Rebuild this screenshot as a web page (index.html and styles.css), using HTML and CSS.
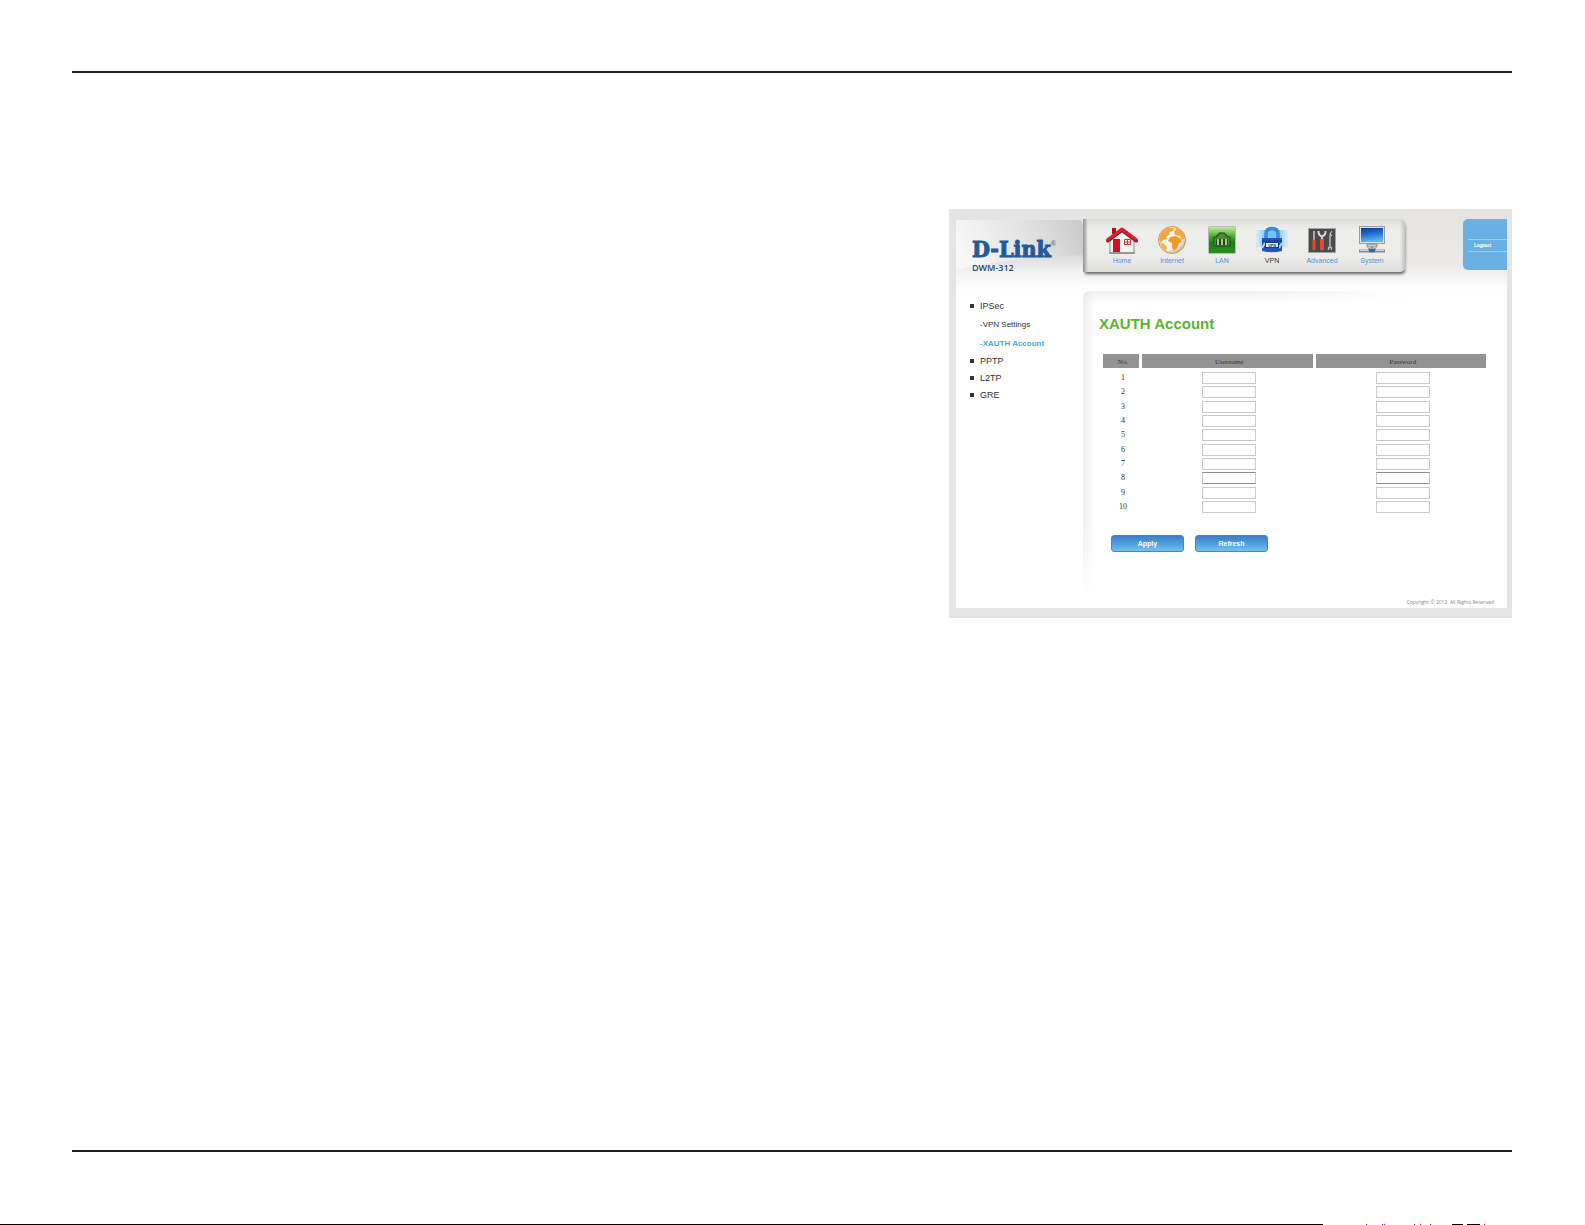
FILE: index.html
```html
<!DOCTYPE html>
<html lang="en">
<head>
  <meta charset="UTF-8">
  <meta name="viewport" content="width=device-width, initial-scale=1.0">
  <title>XAUTH Account</title>
  <link rel="stylesheet" href="styles.css">
</head>
<body>
  <hr class="rule">
  <main>
    <div class="router">
      <header>
        <div class="brand">
          <svg class="brand-bg" viewBox="0 0 127 72" preserveAspectRatio="none" aria-hidden="true">
            <defs>
              <linearGradient id="brandTop" x1="0" y1="0.3" x2="1" y2="0">
                <stop offset="0" stop-color="#f7f7f7"/>
                <stop offset="0.5" stop-color="#e4e4e4"/>
                <stop offset="1" stop-color="#c9c9c9"/>
              </linearGradient>
              <linearGradient id="brandLow" x1="0" y1="0" x2="0" y2="1">
                <stop offset="0" stop-color="#dadada"/>
                <stop offset="0.5" stop-color="#f4f4f4"/>
                <stop offset="1" stop-color="#ffffff"/>
              </linearGradient>
            </defs>
            <path d="M0 1H123Q127 2 127 7V72H0Z" fill="url(#brandTop)"/>
            <path d="M0 51Q60 37 127 36V72H0Z" fill="url(#brandLow)"/>
          </svg>
          <div class="logo">D-Link<sup>®</sup></div>
          <div class="model">DWM-312</div>
        </div>
        <nav class="topnav">
          <a href="#">
            <svg width="32" height="28" viewBox="0 0 32 28">
              <path d="M4 14L16 4L28 14V27H4Z" fill="#f6f4f2" stroke="#8d8d8d"/>
              <path d="M3 27H29" stroke="#888" stroke-width="1.5"/>
              <path d="M6 2H10V8H6Z" fill="#b5121f"/>
              <path d="M2 14.500L16 4L30 14.500" fill="none" stroke="#8e1a22" stroke-width="4" stroke-linejoin="round" stroke-linecap="round"/>
              <path d="M2 13.500L16 3L30 13.500" fill="none" stroke="#dc2030" stroke-width="3" stroke-linejoin="round" stroke-linecap="round"/>
              <path d="M7 13H14V26H7Z" fill="#cf1322"/>
              <path d="M18.500 13.500H24.500V18.500H18.500Z" fill="#fff" stroke="#d0303c"/>
              <path d="M21.500 13V19M18 16H25" stroke="#d0303c"/>
            </svg>
            Home
          </a>
          <a href="#">
            <svg width="30" height="28" viewBox="0 0 30 28">
              <defs>
                <radialGradient id="sea" cx="0.35" cy="0.3" r="0.8">
                  <stop offset="0" stop-color="#ffffff"/>
                  <stop offset="0.7" stop-color="#f0ece4"/>
                  <stop offset="1" stop-color="#b9a78c"/>
                </radialGradient>
              </defs>
              <circle cx="15" cy="14" r="13.500" fill="url(#sea)" stroke="#c09a55"/>
              <path d="M3 9Q6 3 12 1.500L18 2L16 5L12 6L13 8L9 11L10 13L6 14L4 17L2 14Z" fill="#f2a93a"/>
              <path d="M19 2Q26 4 28 12L25 14L23 10L18 9L17 6Z" fill="#f2a93a"/>
              <path d="M13 11L19 10L24 13L25 16L22 17L20 22L17 25L15 21V17L11 15Z" fill="#ee9a24"/>
              <path d="M3 17L7 18L10 21L9 25Q4 22 3 17Z" fill="#f2b04c"/>
            </svg>
            Internet
          </a>
          <a href="#">
            <svg width="28" height="28" viewBox="0 0 28 28">
              <defs>
                <linearGradient id="lanBg" x1="0" y1="0" x2="0" y2="1">
                  <stop offset="0" stop-color="#c8eda8"/>
                  <stop offset="0.35" stop-color="#4fae2b"/>
                  <stop offset="0.6" stop-color="#1c7d1c"/>
                  <stop offset="1" stop-color="#2b8f25"/>
                </linearGradient>
              </defs>
              <rect x="0.500" y="0.500" width="27" height="27" rx="1" fill="url(#lanBg)" stroke="#b4bdb1"/>
              <path d="M6 20V11H9V9H11V7H17V9H19V11H22V20Z" fill="#4f8a32" stroke="#1d4d12"/>
              <path d="M8 13H20V19H8Z" fill="#1a4a17"/>
              <path d="M10 13V19M14 13V19M18 13V19" stroke="#b3c692" stroke-width="2"/>
            </svg>
            LAN
          </a>
          <a href="#" class="current">
            <svg width="32" height="28" viewBox="0 0 32 28">
              <defs>
                <linearGradient id="glow" x1="0" y1="0" x2="1" y2="0">
                  <stop offset="0" stop-color="#a9dcfb" stop-opacity="0.2"/>
                  <stop offset="0.3" stop-color="#74c4f8"/>
                  <stop offset="0.7" stop-color="#74c4f8"/>
                  <stop offset="1" stop-color="#a9dcfb" stop-opacity="0.2"/>
                </linearGradient>
              </defs>
              <rect x="0" y="4" width="32" height="17" fill="url(#glow)"/>
              <path d="M10 13V8Q10 2.500 16 2.500Q22 2.500 22 8V13" fill="none" stroke="#3d86d8" stroke-width="3.500"/>
              <path d="M6 12H26V25Q16 27.500 6 25Z" fill="#1f56b8"/>
              <path d="M6 15H26" stroke="#123c92"/>
              <path d="M6 22L9 17M26 17L23 22" stroke="#b8d6f5" stroke-width="2"/>
              <rect x="9.500" y="16.500" width="13" height="5" fill="#e9f1fb" stroke="#123c92"/>
              <text x="16" y="21" class="tag">VPN</text>
            </svg>
            VPN
          </a>
          <a href="#">
            <svg width="28" height="28" viewBox="0 0 28 28">
              <rect x="0.500" y="2.500" width="27" height="24" fill="#4a4a4a" stroke="#a3a3a3"/>
              <path d="M6 5V15" stroke="#c9c9c9" stroke-width="1.500"/>
              <path d="M6 14V24" stroke="#e8472b" stroke-width="3"/>
              <path d="M10.500 5Q10.500 10 14 10Q17.500 10 17.500 5M14 10V15" fill="none" stroke="#d5d5d5" stroke-width="2"/>
              <path d="M14 13V24" stroke="#e8472b" stroke-width="4"/>
              <path d="M22 9V21" stroke="#bdbdbd" stroke-width="1.500"/>
              <path d="M24 5L22 8L24 10M20.500 24V21.500H23.500V24" fill="none" stroke="#bdbdbd" stroke-width="1.300"/>
            </svg>
            Advanced
          </a>
          <a href="#">
            <svg width="28" height="28" viewBox="0 0 28 28">
              <defs>
                <linearGradient id="screen" x1="0" y1="0" x2="0.200" y2="1">
                  <stop offset="0" stop-color="#0b3c98"/>
                  <stop offset="0.5" stop-color="#2370d0"/>
                  <stop offset="1" stop-color="#5db4f3"/>
                </linearGradient>
              </defs>
              <rect x="1.500" y="0.500" width="25" height="17" fill="#e3e3e3" stroke="#9b9b9b"/>
              <rect x="3" y="2" width="22" height="14" fill="url(#screen)"/>
              <path d="M9 18H19V21H9Z" fill="#c8c8c8" stroke="#909090"/>
              <path d="M14 21V24" stroke="#909090" stroke-width="2"/>
              <path d="M1 25H27" stroke="#8a8a8a" stroke-width="3"/>
              <path d="M2 24.500H26" stroke="#d5d5d5"/>
              <rect x="10.500" y="22.500" width="7" height="4" fill="#2b62bd" stroke="#a5a5a5"/>
            </svg>
            System
          </a>
        </nav>
        <div class="account">
          <a href="#">Logout</a>
        </div>
      </header>

      <div class="columns">
        <ul class="sidebar">
          <li><a href="#">IPSec</a>
            <ul>
              <li><a href="#">-VPN Settings</a></li>
              <li><a href="#" class="active">-XAUTH Account</a></li>
            </ul>
          </li>
          <li><a href="#">PPTP</a></li>
          <li><a href="#">L2TP</a></li>
          <li><a href="#">GRE</a></li>
        </ul>

        <section class="content">
          <h1>XAUTH Account</h1>
          <form>
            <table>
              <thead>
                <tr><th class="no">No.</th><th>Username</th><th>Password</th></tr>
              </thead>
              <tbody>
                <tr><td>1</td><td><input type="text" aria-label="Username 1"></td><td><input type="text" aria-label="Password 1"></td></tr>
                <tr><td>2</td><td><input type="text" aria-label="Username 2"></td><td><input type="text" aria-label="Password 2"></td></tr>
                <tr><td>3</td><td><input type="text" aria-label="Username 3"></td><td><input type="text" aria-label="Password 3"></td></tr>
                <tr><td>4</td><td><input type="text" aria-label="Username 4"></td><td><input type="text" aria-label="Password 4"></td></tr>
                <tr><td>5</td><td><input type="text" aria-label="Username 5"></td><td><input type="text" aria-label="Password 5"></td></tr>
                <tr><td>6</td><td><input type="text" aria-label="Username 6"></td><td><input type="text" aria-label="Password 6"></td></tr>
                <tr><td>7</td><td><input type="text" aria-label="Username 7"></td><td><input type="text" aria-label="Password 7"></td></tr>
                <tr class="dark"><td>8</td><td><input type="text" aria-label="Username 8"></td><td><input type="text" aria-label="Password 8"></td></tr>
                <tr><td>9</td><td><input type="text" aria-label="Username 9"></td><td><input type="text" aria-label="Password 9"></td></tr>
                <tr><td>10</td><td><input type="text" aria-label="Username 10"></td><td><input type="text" aria-label="Password 10"></td></tr>
              </tbody>
            </table>
            <div class="buttons">
              <button type="submit">Apply</button>
              <button type="button">Refresh</button>
            </div>
          </form>
          <p class="copyright">Copyright © 2012 &nbsp;All Rights Reserved</p>
        </section>
      </div>
    </div>
  </main>
  <hr class="rule rule-bottom">
  <div class="edge">
    <span></span>
    <svg width="262" height="1" viewBox="0 0 262 1" shape-rendering="crispEdges" aria-hidden="true">
      <path d="M129 0H140V1H129ZM144 0H157V1H144Z" fill="#000"/>
      <path d="M43 0H44V1H43ZM59 0H60V1H59ZM91 0H92V1H91ZM107 0H108V1H107Z" fill="#22f"/>
      <path d="M61 0H62V1H61ZM97 0H98V1H97ZM161 0H162V1H161Z" fill="#e02020"/>
    </svg>
  </div>
</body>
</html>
```
FILE: styles.css
```css
* {
  box-sizing: border-box;
}
body {
  margin: 0;
  min-height: 100vh;
  display: flex;
  flex-direction: column;
  background: white;
  font-family: "Liberation Sans", Arial, sans-serif;
  color: #333;
}
a {
  color: inherit;
  text-decoration: none;
}
ul {
  list-style: none;
  margin: 0;
  padding: 0;
}
.rule {
  height: 2px;
  margin: 71px 73px 0 72px;
  border: 0;
  background: #231f20;
}
.rule-bottom {
  margin-top: auto;
}
main {
  display: grid;
  grid-template-columns: 877fr 563fr;
  margin: 136px 73px 0 72px;
}
.router {
  grid-column: 2;
  min-width: 563px;
  border: solid #e5e4e2;
  border-width: 10px 5px 10px 7px;
  background: white;
}

/* top bar */
header {
  display: flex;
  align-items: flex-start;
  height: 72px;
  background: linear-gradient(#e5e4e2 0, #ebeae9 45px, #fff 72px);
}
.brand {
  position: relative;
  width: 127px;
  height: 72px;
  padding: 17px 0 0 16px;
}
.brand-bg {
  position: absolute;
  top: 0;
  left: 0;
  width: 100%;
  height: 100%;
}
.logo {
  position: relative;
  display: flex;
  font: bold 23px/26px "DejaVu Serif Condensed", "DejaVu Serif", serif;
  -webkit-text-stroke: 1px #255a98;
  color: #255a98;
}
.logo sup {
  font: 7px/16px "Liberation Sans", sans-serif;
  -webkit-text-stroke: 0;
}
.model {
  position: relative;
  font: 600 9px/12px "Open Sans", sans-serif;
  color: #27496f;
}
.topnav {
  display: flex;
  width: 322px;
  height: 53px;
  padding: 7px 0 0 14px;
  border-radius: 0 5px 5px 0;
  background:
    linear-gradient(to right, #8f8f8f, transparent) 0 0 / 5px 100% no-repeat,
    linear-gradient(to left, #c2c2c2, transparent) 100% 0 / 5px 100% no-repeat,
    linear-gradient(#dcdcdb, #efefee 12px, #ebebea 40px, #dededd);
  box-shadow: 1px 3px 3px -1px #666;
}
.topnav a {
  display: flex;
  flex-direction: column;
  align-items: center;
  width: 50px;
  font-size: 7px;
  line-height: 13px;
  color: #4a94dc;
}
.topnav .current {
  color: #333;
}
.tag {
  font: bold 4px "Liberation Sans", sans-serif;
  text-anchor: middle;
  fill: #123c92;
}
.account {
  width: 44px;
  height: 51px;
  margin-left: auto;
  padding-top: 20px;
  border-radius: 5px 0 0 5px;
  background: #69b0e5;
}
.account a {
  display: block;
  margin-left: 5px;
  padding-left: 6px;
  border: solid #9fd0f1;
  border-width: 1px 0;
  font: bold 5px/11px "Open Sans", sans-serif;
  color: white;
}

/* page body */
.columns {
  display: flex;
  min-height: 317px;
}
.sidebar {
  width: 127px;
  padding: 7px 0 0 14px;
  font-size: 9px;
  line-height: 17px;
}
.sidebar > li::before {
  content: "";
  display: inline-block;
  width: 4px;
  height: 4px;
  margin-right: 6px;
  background: #333;
  vertical-align: 1px;
}
.sidebar ul {
  padding-left: 10px;
  font-size: 8px;
  line-height: 19px;
}
.sidebar .active {
  font-weight: bold;
  color: #4ba6e2;
}
.content {
  flex: 1;
  display: flex;
  flex-direction: column;
  padding: 24px 13px 2px 16px;
  border-top-left-radius: 6px;
  background:
    linear-gradient(transparent 70%, white 96%) 0 0 / 14px 100% no-repeat,
    linear-gradient(to right, #ededec, transparent) 0 0 / 13px 100% no-repeat,
    linear-gradient(to right, transparent 40%, white 78%) 0 0 / 100% 12px no-repeat,
    linear-gradient(#f0f0ef, transparent) 0 0 / 100% 12px no-repeat;
}
h1 {
  margin: 0;
  font-size: 15px;
  line-height: 18px;
  color: #5ab433;
}
table {
  table-layout: fixed;
  width: calc(100% - 6px);
  margin: 21px 0 0 1px;
  border-spacing: 3px 0;
  font: 8px/8px "Liberation Serif", "Times New Roman", serif;
  text-align: center;
}
th {
  height: 14px;
  padding: 2px 0 0 4px;
  background: #939393;
  font-size: 7px;
  font-weight: normal;
}
.no {
  width: 36px;
}
td {
  height: 14px;
  padding: 0 0 0 4px;
}
tr:nth-child(3n) td {
  height: 15px;
}
tbody tr:first-child td {
  height: 17px;
  padding-top: 3px;
}
td input {
  display: block;
  width: 54px;
  height: 12px;
  margin: 0 auto;
  padding: 0 2px;
  border: 1px solid #c9c9c9;
  background: white;
  font: inherit;
}
.dark input {
  border-top-color: #8f8f8f;
  border-bottom-color: #8f8f8f;
}
.buttons {
  display: flex;
  gap: 11px;
  margin: 21px 0 0 12px;
}
button {
  width: 73px;
  height: 17px;
  padding: 0;
  border: 1px solid #4288c8;
  border-radius: 3px;
  background: linear-gradient(#3a80ca, #4d9fdd 50%, #74c2ef);
  font: bold 7px/14px "Liberation Sans", Arial, sans-serif;
  color: white;
  cursor: pointer;
}
.copyright {
  margin: auto 0 0;
  font: 5px/8px "Open Sans", sans-serif;
  text-align: right;
  color: #888;
}

/* bottom edge of the sheet */
.edge {
  display: flex;
  height: 1px;
  margin-top: 72px;
}
.edge span {
  flex: 1;
  background: black;
}
```
